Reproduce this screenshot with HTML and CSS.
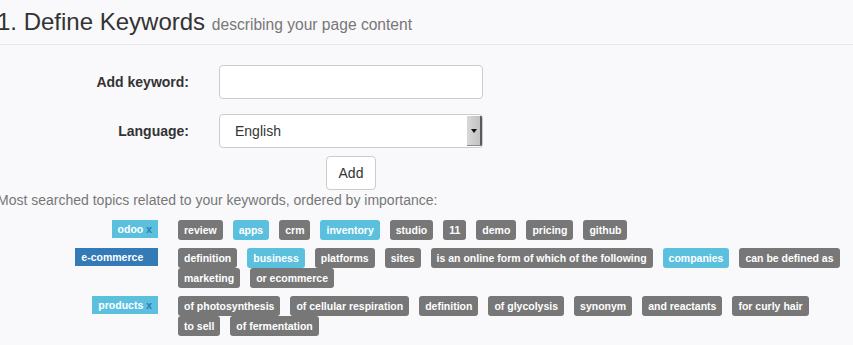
FILE: index.html
```html
<!DOCTYPE html>
<html lang="en">
<head>
	<meta charset="utf-8" />
	<title>Define Keywords</title>
	<meta name="viewport" content="width=device-width,initial-scale=1.0">
	<link rel="stylesheet" href="styles.css">
</head>

<body>
<div class="page">
  <h3 class="page-header">1. Define Keywords <small>describing your page content</small></h3>

  <form class="kw-form" action="#">
    <div class="form-row">
      <label for="keyword">Add keyword:</label>
      <input type="text" id="keyword" class="form-control">
    </div>
    <div class="form-row">
      <label for="lang">Language:</label>
      <div class="select-box">
        <select id="lang">
          <option>English</option>
        </select>
        <span class="select-btn"><span class="caret"></span></span>
      </div>
    </div>
    <div class="form-row btn-row">
      <span></span>
      <div class="btn-cell"><button type="button" class="btn">Add</button></div>
    </div>
  </form>

  <p class="hint">Most searched topics related to your keywords, ordered by importance:</p>

  <div class="topics">
    <div class="topic-row">
      <div class="key"><span class="label label-info">odoo <span class="remove">x</span></span></div>
      <div class="tags">
        <span class="tag">review</span>
        <span class="tag tag-info">apps</span>
        <span class="tag">crm</span>
        <span class="tag tag-info">inventory</span>
        <span class="tag">studio</span>
        <span class="tag">11</span>
        <span class="tag">demo</span>
        <span class="tag">pricing</span>
        <span class="tag">github</span>
      </div>
    </div>

    <div class="topic-row">
      <div class="key"><span class="label label-primary">e-commerce <span class="remove">x</span></span></div>
      <div class="tags">
        <span class="tag">definition</span>
        <span class="tag tag-info">business</span>
        <span class="tag">platforms</span>
        <span class="tag">sites</span>
        <span class="tag">is an online form of which of the following</span>
        <span class="tag tag-info">companies</span>
        <span class="tag">can be defined as</span>
        <span class="tag">marketing</span>
        <span class="tag">or ecommerce</span>
      </div>
    </div>

    <div class="topic-row">
      <div class="key"><span class="label label-info">products <span class="remove">x</span></span></div>
      <div class="tags">
        <span class="tag">of photosynthesis</span>
        <span class="tag">of cellular respiration</span>
        <span class="tag">definition</span>
        <span class="tag">of glycolysis</span>
        <span class="tag">synonym</span>
        <span class="tag">and reactants</span>
        <span class="tag">for curly hair</span>
        <span class="tag">to sell</span>
        <span class="tag">of fermentation</span>
      </div>
    </div>
  </div>
</div>
</body>
</html>
```

FILE: styles.css
```css
body {
  margin: 0;
  background: #f9f9fb;
  font-family: "Liberation Sans", Arial, Helvetica, sans-serif;
  font-size: 14px;
  line-height: 20px;
  color: #333;
}

.page {
  margin-left: -3px;
}

.page-header {
  height: 27px;
  margin: 8px 0 20px;
  padding-bottom: 9px;
  border-bottom: 1px solid #e9e9eb;
  font-size: 24px;
  font-weight: normal;
  line-height: 27px;
  color: #333;
}

.page-header small {
  font-size: 65%;
  line-height: 1;
  color: #777;
}

/* form */
.form-row {
  display: grid;
  grid-template-columns: 192px 264px;
  column-gap: 30px;
  align-items: center;
  margin-bottom: 15px;
}

.form-row label {
  text-align: right;
  font-weight: bold;
}

.form-control {
  box-sizing: border-box;
  height: 34px;
  width: 100%;
  border: 1px solid #ccc;
  border-radius: 4px;
  background: #fff;
  margin: 0;
}

.select-box {
  box-sizing: border-box;
  height: 34px;
  display: flex;
  border: 1px solid #ccc;
  border-radius: 4px;
  background: #fff;
  overflow: hidden;
}

.select-box select {
  flex: 1;
  -webkit-appearance: none;
  appearance: none;
  border: none;
  background: transparent;
  font-family: inherit;
  font-size: 14px;
  color: #333;
  padding: 0 0 0 15px;
  outline: none;
}

.select-btn {
  width: 13px;
  margin: 1px 0;
  display: flex;
  align-items: center;
  justify-content: center;
  background: linear-gradient(to right, #d8d8d8, #c2c2c2);
  border-right: 2px solid #5a5a5a;
  border-bottom: 1px solid #8a8a8a;
}

.caret {
  width: 0;
  height: 0;
  border-left: 3px solid transparent;
  border-right: 3px solid transparent;
  border-top: 4px solid #111;
}

.btn-row {
  margin-top: -7px;
  margin-bottom: 0;
}

.btn-cell {
  text-align: center;
}

.btn {
  height: 34px;
  padding: 6px 12px;
  font-family: inherit;
  font-size: 14px;
  line-height: 20px;
  color: #333;
  background: #fff;
  border: 1px solid #ccc;
  border-radius: 4px;
  cursor: pointer;
}

.hint {
  margin: 0;
  color: #777;
}

/* topics */
.topics {
  margin-top: 10px;
}

.topic-row {
  display: grid;
  grid-template-columns: 161px 1fr;
  column-gap: 20px;
  margin-bottom: 8px;
}

.key {
  text-align: right;
  line-height: 18px;
}

.label,
.tag {
  display: inline-block;
  font-size: 10.5px;
  font-weight: bold;
  line-height: 12px;
  color: #fff;
  white-space: nowrap;
  vertical-align: top;
}

.label {
  padding: 3px 6px;
}

.label-info {
  background-color: #5bc0de;
}

.label-primary {
  background-color: #337ab7;
}

.remove {
  color: #337ab7;
}

.tags {
  display: flex;
  flex-wrap: wrap;
  align-items: flex-start;
  column-gap: 10px;
}

.tag {
  padding: 4px 6px;
  border-radius: 3px;
  background-color: #777;
}

.tag-info {
  background-color: #5bc0de;
}
```
